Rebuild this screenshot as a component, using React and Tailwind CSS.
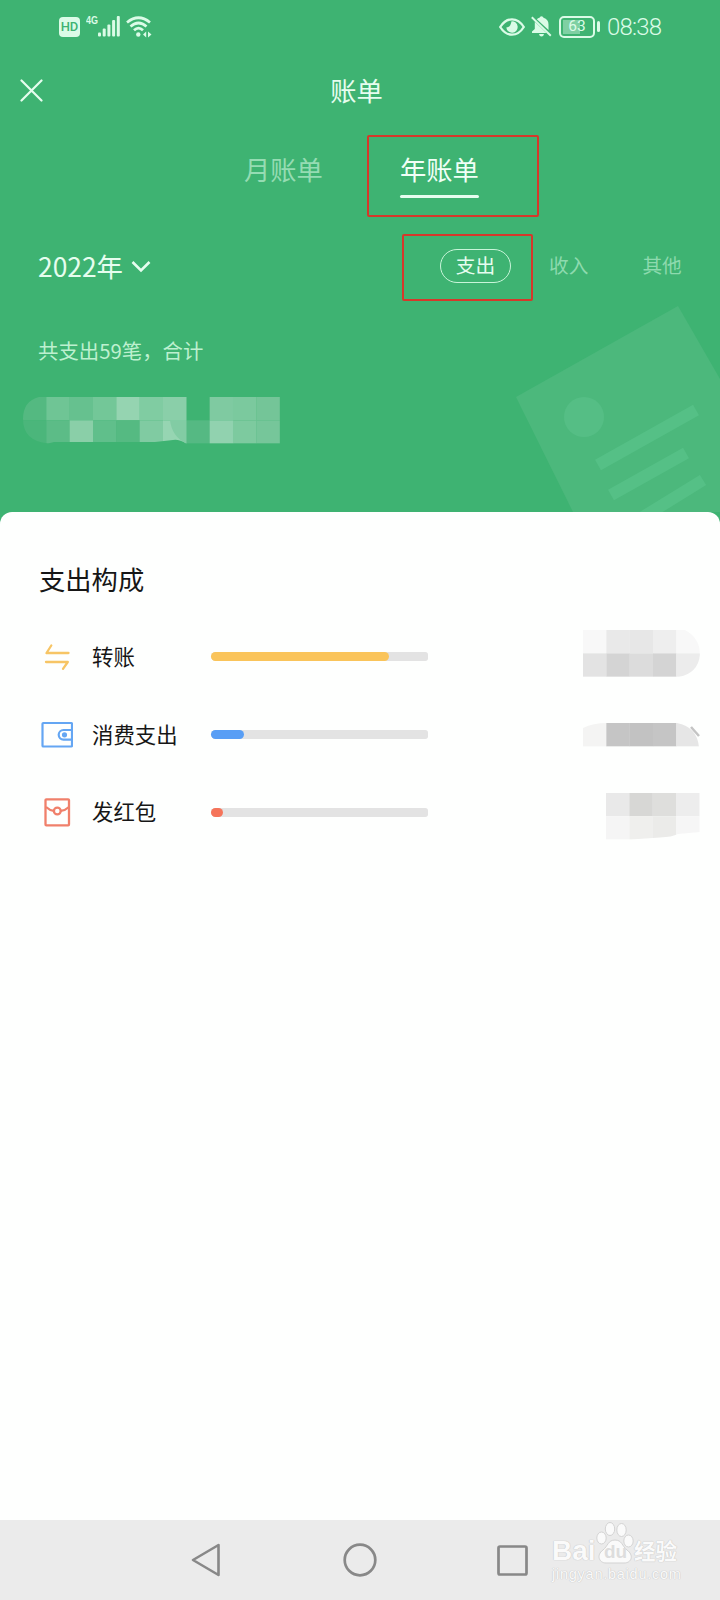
import React from "react";

const categories = [
  { name: "转账", Icon: TransferIcon, Amount: TransferAmount, color: "bg-[#fac45a]", width: 178 },
  { name: "消费支出", Icon: WalletIcon, Amount: SpendAmount, color: "bg-[#589ef5]", width: 33 },
  { name: "发红包", Icon: PacketIcon, Amount: PacketAmount, color: "bg-[#f5745a]", width: 11.5 },
];

// cells: [column, row, fill], one cell is 23.33px
const Cells = ({ cells }) =>
  cells.map(([x, y, fill]) => (
    <rect key={`${x}-${y}`} x={x * 23.333} y={y * 23.333} width="23.5" height="23.333" fill={fill} />
  ));

function TransferIcon() {
  return (
    <svg width="32" height="32" viewBox="0 0 32 32" fill="none" stroke="#f7c565" strokeWidth="2.3" strokeLinecap="round" strokeLinejoin="round">
      <path d="M10.3 4.5 5.5 12H27.5" />
      <path d="M5 21H26.8L22 27.8" />
    </svg>
  );
}

function WalletIcon() {
  return (
    <svg width="32" height="32" viewBox="0 0 32 32" fill="none" stroke="#64a6f3" strokeWidth="2.2" strokeLinejoin="round">
      <rect x="1.5" y="4" width="29.5" height="23.5" rx="0.8" />
      <path d="M31 11H22.5a4.8 4.8 0 0 0 0 9.6H31" />
      <circle cx="23.5" cy="15.8" r="1.5" fill="#64a6f3" />
    </svg>
  );
}

function PacketIcon() {
  return (
    <svg width="32" height="32" viewBox="0 0 32 32" fill="none" stroke="#f0806b" strokeWidth="2.3" strokeLinejoin="round">
      <rect x="4.5" y="3.3" width="23.5" height="26" rx="0.8" />
      <path d="M5 11Q8.5 14.3 12.8 14.8M28 11Q24.5 14.3 19.8 14.8" />
      <circle cx="16.3" cy="15" r="3.4" />
    </svg>
  );
}

function TransferAmount() {
  return (
    <svg className="-mt-[7px]" width="117" height="47" viewBox="0 0 117 47">
      <clipPath id="transfer">
        <path d="M0 0H102Q117 8 117 25Q115 43 96 47H0Z" />
      </clipPath>
      <g clipPath="url(#transfer)">
        <Cells
          cells={[
            [0, 0, "#f8f8f8"], [1, 0, "#e9e9e9"], [2, 0, "#e7e7e7"], [3, 0, "#eeeeee"], [4, 0, "#f8f8f8"],
            [0, 1, "#e3e3e3"], [1, 1, "#d4d4d4"], [2, 1, "#dcdcdc"], [3, 1, "#d4d4d4"], [4, 1, "#ececec"],
          ]}
        />
      </g>
    </svg>
  );
}

function SpendAmount() {
  return (
    <svg width="117" height="24" viewBox="0 0 117 24">
      <clipPath id="spend">
        <path d="M0 5Q10 0 24 0H94Q114 4 116 24H0Z" />
      </clipPath>
      <g clipPath="url(#spend)">
        <Cells cells={[[0, 0, "#f4f4f3"], [1, 0, "#c5c5c5"], [2, 0, "#c2c2c2"], [3, 0, "#c5c5c5"], [4, 0, "#e6e6e6"]]} />
      </g>
      <path d="M108 4 116 13" stroke="#c4c4c4" strokeWidth="2.5" />
    </svg>
  );
}

function PacketAmount() {
  return (
    <svg className="mt-[9px]" width="94" height="47" viewBox="0 0 94 47">
      <clipPath id="packet">
        <path d="M0 0H94V39L72 41Q66 44 54 44.5L25 46.5H0Z" />
      </clipPath>
      <g clipPath="url(#packet)">
        <Cells
          cells={[
            [0, 0, "#e9e9e9"], [1, 0, "#d7d7d5"], [2, 0, "#dededc"], [3, 0, "#ededed"],
            [0, 1, "#f5f5f5"], [1, 1, "#efefed"], [2, 1, "#ebebe9"], [3, 1, "#f6f6f6"],
          ]}
        />
      </g>
    </svg>
  );
}

const TotalAmount = () => (
  <svg width="257" height="47" viewBox="0 0 257 47">
    <clipPath id="total">
      <path d="M16 0H257V46.5H163Q156 42 150 43L132 45H31L25 46.5Q0 44 0 22Q0 4 16 0Z" />
    </clipPath>
    <g clipPath="url(#total)">
      <Cells
        cells={[
          [0, 0, "#54b981"], [1, 0, "#6fc595"], [2, 0, "#66c18f"], [3, 0, "#73c798"], [4, 0, "#95d4b1"], [5, 0, "#80cca2"], [6, 0, "#8acfa9"],
          [8, 0, "#7fcaa1"], [9, 0, "#7bc99e"], [10, 0, "#74c598"],
          [0, 1, "#4bb67b"], [1, 1, "#5cbc87"], [2, 1, "#8acfa8"], [3, 1, "#60bf8b"], [4, 1, "#55ba82"], [5, 1, "#80cba2"], [6, 1, "#96d5b2"],
          [7, 1, "#55b983"], [8, 1, "#91d2af"], [9, 1, "#7dca9f"], [10, 1, "#76c69a"],
        ]}
      />
      <path d="M147 23.3H163.4V46.5Q149 40 147 23.3Z" fill="#82cca4" />
    </g>
  </svg>
);

const StatusBar = () => (
  <div className="flex h-[53px] items-center justify-between pl-[59px] pr-[58px] text-[#dbfbe7]">
    <div className="flex items-center">
      <span className="flex h-5 w-[21px] items-center justify-center rounded-[4px] bg-[#dbfbe7] font-['Roboto'] text-[13px] font-medium leading-none text-[#3eb372]">
        HD
      </span>
      <span className="mb-[11px] ml-[6px] w-[12px] whitespace-nowrap font-['Liberation_Sans'] text-[11.5px] font-bold leading-none">
        <span className="inline-block origin-left scale-x-[0.78]">4G</span>
      </span>
      <svg width="22" height="21" viewBox="0 0 22 21" fill="currentColor">
        <rect x="0" y="16.5" width="3" height="4" rx="1" />
        <rect x="4.7" y="12.5" width="3" height="8" rx="1" />
        <rect x="9.4" y="8.5" width="3" height="12" rx="1" />
        <rect x="14.1" y="4" width="3" height="16.5" rx="1" />
        <rect x="18.8" y="0" width="3" height="20.5" rx="1" />
      </svg>
      <svg className="ml-[6px]" width="26" height="22" viewBox="0 0 26 22" fill="none" stroke="currentColor" strokeWidth="2.7">
        <path d="M1 6.5Q12.5-3 24 6.5" />
        <path d="M4.5 10.5Q12.5 3.5 20.5 10.5" />
        <path d="M8 14.3Q12.5 10 17 14.3" />
        <circle cx="12.3" cy="18.5" r="2.2" fill="currentColor" stroke="none" />
        <path d="M20.2 15.5V21.5L17 18.5ZM22 15.5V21.5L25.5 18.5Z" fill="currentColor" stroke="none" />
      </svg>
    </div>
    <div className="flex items-center">
      <svg width="26" height="18" viewBox="0 0 26 18" fill="none" stroke="currentColor" strokeWidth="2.3">
        <path d="M1.2 9Q6 1.3 13 1.3T24.8 9Q20 16.7 13 16.7T1.2 9Z" />
        <path d="M12.5 3.3A5.7 5.7 0 1 1 7.3 9.5Q11.5 9.5 12.5 3.3Z" fill="currentColor" stroke="none" />
      </svg>
      <svg className="ml-[6px]" width="21" height="21" viewBox="0 0 21 21" fill="currentColor">
        <path d="M5.8 3.3Q7 2.2 8.5 1.8Q8.8.3 10.5.3T12.5 1.8Q17.5 3.2 17.5 8.5V14Z" />
        <path d="M3.8 5.8 15.5 17H1V15.5L3.8 13Z" />
        <path d="M8 18H13Q12.5 20.5 10.5 20.5T8 18Z" />
        <path d="M.8 1.3 19.8 19.8" stroke="currentColor" strokeWidth="1.9" />
      </svg>
      <div className="ml-[7px] flex h-[22px] w-[36px] items-center justify-center rounded-[5px] border-2 border-[#dbfbe7] p-[2px]">
        <span className="flex h-full w-full items-center justify-center bg-[linear-gradient(to_right,#7fd0a3_60%,transparent_60%)] font-['Roboto'] text-[15.5px] leading-none">
          63
        </span>
      </div>
      <span className="ml-[2px] h-[11px] w-[3px] rounded-sm bg-[#dbfbe7]" />
      <span className="ml-[7px] mt-px w-[55px] whitespace-nowrap font-['Roboto'] text-[24px] font-light leading-none tracking-[-0.8px]">08:38</span>
    </div>
  </div>
);

const Receipt = () => (
  <svg className="absolute bottom-0 right-0" width="240" height="222" viewBox="0 0 240 222">
    <path d="M36 107 198 16 240 89V222H93Z" fill="#4cb87c" />
    <circle cx="104" cy="127" r="20" fill="#55be85" />
    <path d="M118 175 216 120M131 205 206 163M150 235 223 190" stroke="#55c086" strokeWidth="12" />
  </svg>
);

const Watermark = () => (
  <div className="absolute right-[38px] top-0 flex h-[66px] w-[130px] flex-col text-[#fafafa] [text-shadow:0_0_1px_#c4c4c4,0_0_1px_#c4c4c4]">
    <div className="flex h-[44px] items-end">
      <span className="w-[44px] font-['Liberation_Sans'] text-[28px] font-bold leading-[27px]">Bai</span>
      <div className="relative h-[44px] w-[37px]">
        <svg width="38" height="44" viewBox="0 0 38 44" fill="#fafafa" stroke="#d3d3d3" strokeWidth="1">
          <ellipse cx="5.5" cy="18" rx="4.7" ry="6" />
          <ellipse cx="14" cy="9" rx="4.7" ry="6.5" />
          <ellipse cx="25.5" cy="10" rx="4.7" ry="6.5" />
          <ellipse cx="32.5" cy="21" rx="4.7" ry="6" />
          <path d="M19 20C12 20 12 26 7 30C0 35 3 43 10 43H28C36 43 38 35 31 30C26 26 26 20 19 20Z" />
        </svg>
        <span className="absolute left-[8px] top-[22px] font-['Liberation_Sans'] text-[19px] font-bold leading-[20px] text-[#dddddd] [text-shadow:none]">du</span>
      </div>
      <span className="ml-[1px] whitespace-nowrap text-[21.5px] font-bold leading-[29px]">经验</span>
    </div>
    <span className="mt-[2px] whitespace-nowrap font-['Liberation_Sans'] text-[14.5px] leading-[17px] tracking-[0.75px]">jingyan.baidu.com</span>
  </div>
);

const App = () => {
  return (
    <div className="flex h-[1600px] w-[720px] flex-col overflow-hidden bg-[#3eb372] font-['Noto_Sans_CJK_SC',sans-serif]">
      <header className="relative h-[512px] shrink-0 text-[#e6fdef]">
        <Receipt />
        <StatusBar />

        {/* Title */}
        <div className="grid h-[74px] grid-cols-[80px_1fr_80px] items-center">
          <svg className="ml-[20px]" width="23" height="23" viewBox="0 0 23 23" stroke="currentColor" strokeWidth="2.2" strokeLinecap="round">
            <path d="M1.5 1.5 21.5 21.5M21.5 1.5 1.5 21.5" />
          </svg>
          <h1 className="pr-[7px] text-center text-[26.3px] leading-[30px]">账单</h1>
        </div>

        {/* Month / year tabs */}
        <div className="flex h-[86px] items-center gap-[77px] pl-[244px] text-[26.3px] leading-[30px]">
          <span className="-mt-[3px] text-[#95dcb3]">月账单</span>
          <div className="relative -mt-[3px] text-[#f0fff6]">
            年账单
            <span className="absolute -bottom-[14px] left-0 h-[3px] w-[79px] rounded-sm bg-[#e6fdef]" />
            <span className="absolute -left-[33px] -top-[19px] h-[82px] w-[172px] rounded-[2px] border-2 border-[#d6382a]" />
          </div>
        </div>

        {/* Year and type */}
        <div className="flex h-[106px] items-center pl-[38px] text-[19.7px] leading-[24px]">
          <span className="-mt-px w-[86px] whitespace-nowrap text-[26.4px] leading-[30px]">2022年</span>
          <svg className="ml-[7px]" width="20" height="13" viewBox="0 0 20 13" fill="none" stroke="currentColor" strokeWidth="2.6">
            <path d="M1.5 2 10 10.5 18.5 2" />
          </svg>
          <div className="relative ml-[289px] flex h-[34px] w-[71px] shrink-0 items-center justify-center rounded-full border-[1.5px] border-[#c8f5d9] pb-[2px]">
            支出
            <span className="absolute -left-[39px] -top-[16px] h-[67px] w-[131px] rounded-[2px] border-2 border-[#d6382a]" />
          </div>
          <span className="-mt-[2px] ml-[38px] text-[#8ddaae]">收入</span>
          <span className="-mt-[2px] ml-[54px] text-[#8ddaae]">其他</span>
        </div>

        <p className="h-[62px] pl-[38px] text-[20.4px] leading-[62px] text-[#bdf0cf]">共支出59笔，合计</p>
        <div className="pl-[23.3px] pt-[16px]">
          <TotalAmount />
        </div>
      </header>

      <main className="flex-1 rounded-t-[12px] bg-[#fefffe] pt-[47px]">
        <h2 className="pl-[39px] text-[26.3px] leading-[40px] text-[#161616]">支出构成</h2>
        <div className="mt-[19px]">
          {categories.map(({ name, Icon, Amount, color, width }) => (
            <div key={name} className="flex h-[77.7px] items-center pl-[41px] pr-[20px]">
              <Icon />
              <span className="-mt-[2px] ml-[19px] w-[119px] text-[21.4px] leading-[28px] text-[#161616]">{name}</span>
              <div className="h-[9.3px] w-[217px] rounded-l-[5px] rounded-r-[3px] bg-[#e3e3e3]">
                <div className={`h-full rounded-full ${color}`} style={{ width }} />
              </div>
              <div className="ml-auto">
                <Amount />
              </div>
            </div>
          ))}
        </div>
      </main>

      {/* System navigation */}
      <nav className="relative flex h-[80px] shrink-0 items-center bg-[#ebebeb] pl-[191px] text-[#888888]">
        <svg width="30" height="36" viewBox="0 0 30 36" fill="none" stroke="currentColor" strokeWidth="2.6" strokeLinejoin="round">
          <path d="M2 18 27.5 3V33Z" />
        </svg>
        <svg className="ml-[122px]" width="34" height="34" viewBox="0 0 34 34" fill="none" stroke="currentColor" strokeWidth="2.7">
          <circle cx="17" cy="17" r="15.3" />
        </svg>
        <svg className="ml-[120px]" width="31" height="31" viewBox="0 0 31 31" fill="none" stroke="currentColor" strokeWidth="2.7">
          <rect x="1.5" y="1.5" width="28" height="28" rx="1.5" />
        </svg>
        <Watermark />
      </nav>
    </div>
  );
};

export default App;
